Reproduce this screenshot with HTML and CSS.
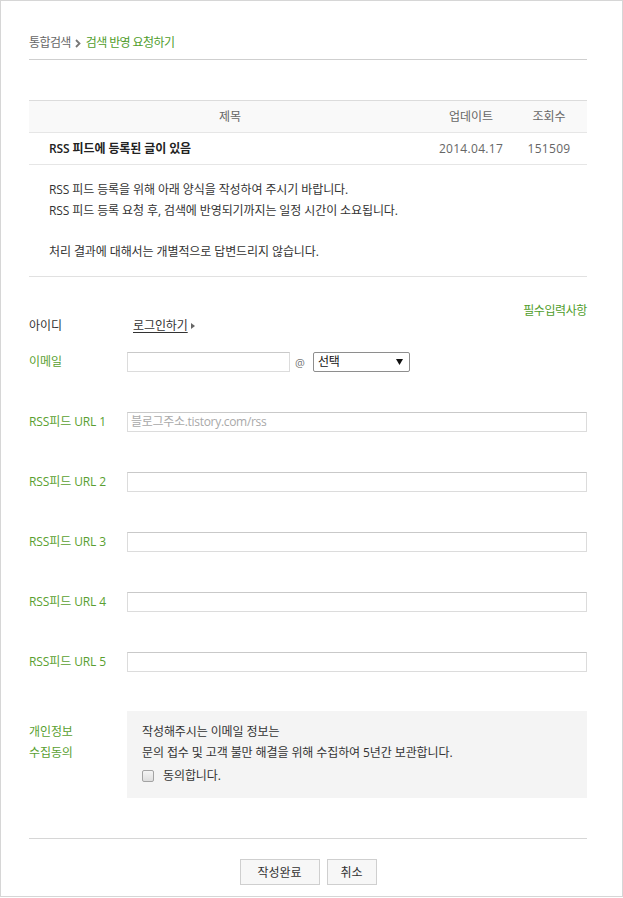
FILE: index.html
```html
<!DOCTYPE html>
<html lang="ko">
<head>
<meta charset="utf-8">
<title>검색 반영 요청하기</title>
<link rel="stylesheet" href="styles.css">
</head>
<body>
<div class="page">
  <div class="breadcrumb">
    <span class="crumb">통합검색</span>
    <svg class="crumb-sep" width="6" height="9" viewBox="0 0 6 9"><polyline points="1,1 4.5,4.5 1,8" fill="none" stroke="#777" stroke-width="1.8"/></svg>
    <span class="crumb-current">검색 반영 요청하기</span>
  </div>

  <table class="board">
    <thead>
      <tr><th class="col-title">제목</th><th class="col-date">업데이트</th><th class="col-views">조회수</th></tr>
    </thead>
    <tbody>
      <tr><td class="title">RSS 피드에 등록된 글이 있음</td><td class="num">2014.04.17</td><td class="num">151509</td></tr>
    </tbody>
  </table>

  <div class="notice">
    <p>RSS 피드 등록을 위해 아래 양식을 작성하여 주시기 바랍니다.<br>RSS 피드 등록 요청 후, 검색에 반영되기까지는 일정 시간이 소요됩니다.</p>
    <p>처리 결과에 대해서는 개별적으로 답변드리지 않습니다.</p>
  </div>

  <form class="form">
    <p class="required">필수입력사항</p>
    <div class="row row-id">
      <span class="label plain">아이디</span>
      <div class="field"><a class="login" href="#">로그인하기</a><svg class="login-arrow" width="4" height="6" viewBox="0 0 4 6"><polygon points="0,0 4,3 0,6" fill="#666"/></svg></div>
    </div>
    <div class="row row-email">
      <span class="label">이메일</span>
      <div class="field">
        <span class="input email"></span><span class="at">@</span>
        <span class="select">선택<svg class="select-arrow" width="7" height="6" viewBox="0 0 7 6"><polygon points="0,0 7,0 3.5,6" fill="#111"/></svg></span>
      </div>
    </div>
    <div class="row">
      <span class="label">RSS피드 URL 1</span>
      <div class="field"><span class="input wide placeholder">블로그주소.tistory.com/rss</span></div>
    </div>
    <div class="row">
      <span class="label">RSS피드 URL 2</span>
      <div class="field"><span class="input wide"></span></div>
    </div>
    <div class="row">
      <span class="label">RSS피드 URL 3</span>
      <div class="field"><span class="input wide"></span></div>
    </div>
    <div class="row">
      <span class="label">RSS피드 URL 4</span>
      <div class="field"><span class="input wide"></span></div>
    </div>
    <div class="row">
      <span class="label">RSS피드 URL 5</span>
      <div class="field"><span class="input wide"></span></div>
    </div>
    <div class="row row-privacy">
      <span class="label multi">개인정보<br>수집동의</span>
      <div class="privacy-box">
        <p>작성해주시는 이메일 정보는<br>문의 접수 및 고객 불만 해결을 위해 수집하여 5년간 보관합니다.</p>
        <label class="agree"><span class="checkbox"></span>동의합니다.</label>
      </div>
    </div>
    <div class="buttons">
      <span class="btn">작성완료</span>
      <span class="btn">취소</span>
    </div>
  </form>
</div>
</body>
</html>
```

FILE: styles.css
```css
* { box-sizing: border-box; }
html, body { margin: 0; padding: 0; background: #fff; }
body {
  font-family: "Open Sans", "Noto Sans CJK KR", sans-serif;
  font-size: 12px;
  letter-spacing: -0.1px;
  color: #333;
}
p { margin: 0; }

.page {
  width: 623px;
  height: 897px;
  border: 1px solid #d6d6d6;
  padding: 0 35px 0 28px;
}

/* breadcrumb */
.breadcrumb {
  display: flex;
  align-items: center;
  padding-top: 33px;
  padding-bottom: 7px;
  line-height: 18px;
  letter-spacing: -0.6px;
  border-bottom: 1px solid #cfcfcf;
}
.crumb { color: #666; }
.crumb-sep { margin: 0 5px 0 4px; }
.crumb-current { color: #4f9d2b; }

/* table */
.board {
  width: 100%;
  margin-top: 40px;
  border-collapse: separate;
  border-spacing: 0;
}
.board th {
  font-weight: normal;
  color: #666;
  background: #f9f9f9;
  line-height: 31px;
  padding: 0;
  border-top: 1px solid #dcdcdc;
  border-bottom: 1px solid #e6e6e6;
}
.board .col-date { width: 80px; }
.board .col-views { width: 76px; }
.board td {
  line-height: 31px;
  padding: 0;
  border-bottom: 1px solid #e6e6e6;
}
.board td.title {
  padding-left: 20px;
  font-weight: 600;
  color: #222;
}
.board td.num {
  text-align: center;
  color: #666;
  letter-spacing: 0.3px;
}

/* notice */
.notice {
  padding: 14px 20px;
  line-height: 21px;
  color: #333;
  border-bottom: 1px solid #e1e1e1;
}
.notice p + p { margin-top: 20px; }

/* form */
.form { padding-top: 27px; }
.required {
  text-align: right;
  color: #4f9d2b;
  line-height: 14px;
  letter-spacing: -0.4px;
}
.row {
  display: grid;
  grid-template-columns: 98px 1fr;
  align-items: center;
  margin-top: 40px;
}
.row-id { margin-top: 0; line-height: 16px; }
.row-email { margin-top: 18px; }
.row-privacy { margin-top: 39px; }
.label { color: #5a9f31; line-height: 20px; }
.label.plain { color: #333; line-height: 16px; }
.label.multi { line-height: 21px; align-self: start; padding-top: 10px; }

.field { display: flex; align-items: center; }
.login {
  margin-left: 6px;
  color: #333;
  text-decoration: underline;
  text-underline-offset: 2px;
}
.login-arrow { margin-left: 3px; }

.input {
  display: block;
  height: 20px;
  border: 1px solid #dcdcdc;
  border-top-color: #c9c9c9;
  background: #fff;
  line-height: 18px;
  padding-left: 3px;
}
.input.email { width: 163px; }
.input.wide { width: 100%; }
.input.placeholder { color: #a9a9a9; letter-spacing: -0.3px; }
.at {
  margin: 0 8px 0 5px;
  color: #777;
  font-size: 11px;
  letter-spacing: 0;
}
.select {
  display: flex;
  align-items: center;
  justify-content: space-between;
  width: 97px;
  height: 20px;
  border: 1px solid #8e8e8e;
  border-radius: 2px;
  padding: 0 6px 0 4px;
  color: #111;
  line-height: 18px;
}

/* privacy */
.privacy-box {
  background: #f4f4f4;
  padding: 10px 16px 12px 15px;
  line-height: 21px;
  color: #333;
}
.agree {
  display: flex;
  align-items: center;
  margin-top: 3px;
  line-height: 20px;
}
.checkbox {
  display: inline-block;
  width: 12px;
  height: 12px;
  border: 1px solid #a3a3a3;
  border-radius: 2px;
  background: linear-gradient(#f4f4f4, #dedede);
  margin-right: 9px;
}

/* buttons */
.buttons {
  display: flex;
  justify-content: center;
  gap: 7px;
  margin-top: 40px;
  padding-top: 20px;
  border-top: 1px solid #d6d6d6;
}
.btn {
  display: flex;
  align-items: center;
  justify-content: center;
  height: 26px;
  border: 1px solid #cfcfcf;
  background: #f7f7f7;
  color: #333;
}
.btn:first-child { width: 80px; }
.btn:last-child { width: 50px; }
```
